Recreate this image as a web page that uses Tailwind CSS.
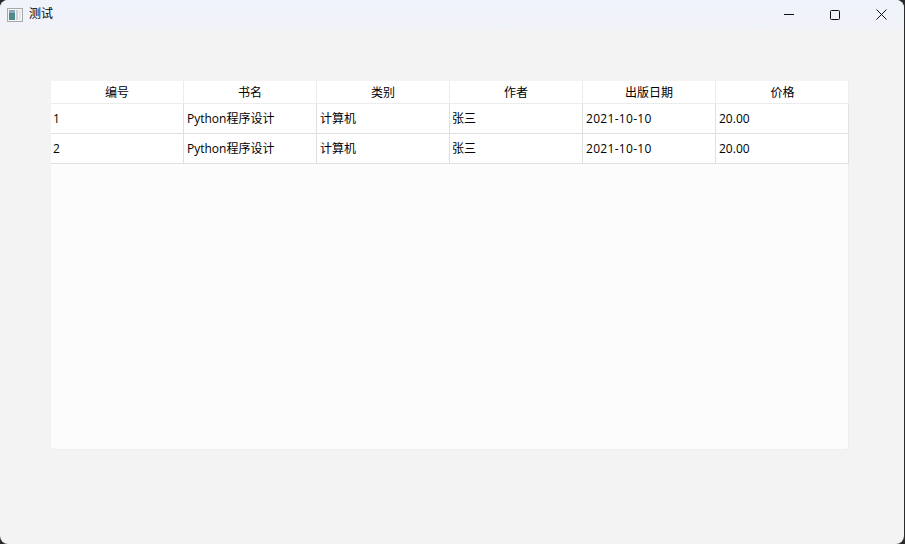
<!DOCTYPE html>
<html lang="zh">
<head>
    <meta charset="UTF-8">
    <title>测试</title>
    <script src="https://cdn.jsdelivr.net/npm/@tailwindcss/browser@4"></script>
</head>
<body class="bg-[#2a2a2a] overflow-hidden">
    <div class="w-[904px] h-[544px] bg-[#f3f3f3] rounded-lg overflow-hidden flex flex-col text-[12px] text-black font-['Open_Sans','Noto_Sans_CJK_SC',sans-serif]">
        <!-- title bar -->
        <div class="h-[29px] shrink-0 bg-gradient-to-b from-[#eff3fb] to-[#f1f3f8] flex items-center pl-[7px]">
            <svg width="16" height="14" viewBox="0 0 16 14">
                <rect x="0.5" y="0.5" width="15" height="13" fill="#f4f4f4" stroke="#a9a9a9"/>
                <rect x="2" y="2" width="6" height="10" fill="#4d8a8c"/>
                <rect x="2" y="2" width="6" height="3" fill="#8ea6b8"/>
                <rect x="9" y="2" width="2" height="10" fill="#c9d3d6"/>
                <rect x="12" y="2" width="2" height="10" fill="#e3e7e8"/>
            </svg>
            <span class="ml-[6px] leading-[16px] -mt-px">测试</span>
            <div class="ml-auto flex items-center">
                <div class="w-[46px] h-[29px] flex items-center justify-center">
                    <svg width="10" height="10" viewBox="0 0 10 10"><path d="M0 4.5H10" stroke="#111" fill="none"/></svg>
                </div>
                <div class="w-[46px] h-[29px] flex items-center justify-center">
                    <svg width="10" height="10" viewBox="0 0 10 10"><rect x="0.5" y="0.5" width="9" height="9" rx="1" stroke="#111" fill="none"/></svg>
                </div>
                <div class="w-[46px] h-[29px] flex items-center justify-center">
                    <svg width="11" height="11" viewBox="0 0 11 11"><path d="M0.5 0.5L10.5 10.5M10.5 0.5L0.5 10.5" stroke="#111" fill="none"/></svg>
                </div>
            </div>
        </div>
        <!-- table -->
        <div class="mt-[52px] ml-[51px] w-[798px] h-[369px] bg-[#fcfcfc] rounded-b border-b border-r border-[#eeeeee]">
            <div class="grid grid-cols-[repeat(6,133px)] h-[23px] bg-white border-b border-[#ececec] text-center leading-[24px]">
                <div class="border-r border-[#ececec]">编号</div>
                <div class="border-r border-[#ececec]">书名</div>
                <div class="border-r border-[#ececec]">类别</div>
                <div class="border-r border-[#ececec]">作者</div>
                <div class="border-r border-[#ececec]">出版日期</div>
                <div>价格</div>
            </div>
            <div class="grid grid-cols-[repeat(6,133px)] h-[30px] bg-white border-b border-[#e0e0e0] leading-[30px]">
                <div class="border-r border-[#e0e0e0] pl-[2px]">1</div>
                <div class="border-r border-[#e0e0e0] pl-[3px]">Python程序设计</div>
                <div class="border-r border-[#e0e0e0] pl-[3px]">计算机</div>
                <div class="border-r border-[#e0e0e0] pl-[2px]">张三</div>
                <div class="border-r border-[#e0e0e0] pl-[3px] tracking-[0.3px]">2021-10-10</div>
                <div class="border-r border-[#e0e0e0] pl-[3px]">20.00</div>
            </div>
            <div class="grid grid-cols-[repeat(6,133px)] h-[30px] bg-white border-b border-[#e0e0e0] leading-[30px]">
                <div class="border-r border-[#e0e0e0] pl-[2px]">2</div>
                <div class="border-r border-[#e0e0e0] pl-[3px]">Python程序设计</div>
                <div class="border-r border-[#e0e0e0] pl-[3px]">计算机</div>
                <div class="border-r border-[#e0e0e0] pl-[2px]">张三</div>
                <div class="border-r border-[#e0e0e0] pl-[3px] tracking-[0.3px]">2021-10-10</div>
                <div class="border-r border-[#e0e0e0] pl-[3px]">20.00</div>
            </div>
        </div>
    </div>
</body>
</html>
